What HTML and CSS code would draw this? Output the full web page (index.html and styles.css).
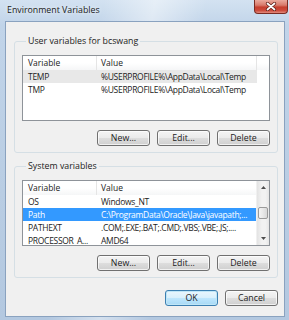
FILE: index.html
```html
<!DOCTYPE html>
<html>
<head>
<meta charset="utf-8">
<link rel="stylesheet" href="styles.css">
</head>
<body>
<div class="window">
  <div class="titlebar">
    <span class="title">Environment Variables</span>
    <div class="close">
      <svg width="12" height="9" viewBox="0 0 12 9"><path d="M2.5 1.5 L9.5 7.5 M9.5 1.5 L2.5 7.5" stroke="#5a1a12" stroke-width="3.2" stroke-linecap="round"/><path d="M2.5 1.5 L9.5 7.5 M9.5 1.5 L2.5 7.5" stroke="#ffffff" stroke-width="1.8" stroke-linecap="round"/></svg>
    </div>
  </div>
  <div class="client">
    <fieldset class="group">
      <legend class="group-label">User variables for bcswang</legend>
      <div class="list">
        <div class="list-main">
          <div class="header">
            <div class="hcell col-var">Variable</div>
            <div class="hcell col-val">Value</div>
            <div class="hcell col-fill"></div>
          </div>
          <div class="row row-inactive"><div class="cell col-var">TEMP</div><div class="cell col-val">%USERPROFILE%\AppData\Local\Temp</div></div>
          <div class="row"><div class="cell col-var">TMP</div><div class="cell col-val">%USERPROFILE%\AppData\Local\Temp</div></div>
        </div>
      </div>
      <div class="btn-row">
        <button class="btn">New...</button>
        <button class="btn">Edit...</button>
        <button class="btn">Delete</button>
      </div>
    </fieldset>
    <fieldset class="group group-second">
      <legend class="group-label">System variables</legend>
      <div class="list">
        <div class="list-main">
          <div class="header">
            <div class="hcell col-var">Variable</div>
            <div class="hcell col-val">Value</div>
          </div>
          <div class="row"><div class="cell col-var">OS</div><div class="cell col-val">Windows_NT</div></div>
          <div class="row row-selected"><div class="cell col-var">Path</div><div class="cell col-val">C:\ProgramData\Oracle\Java\javapath;...</div></div>
          <div class="row"><div class="cell col-var">PATHEXT</div><div class="cell col-val">.COM;.EXE;.BAT;.CMD;.VBS;.VBE;.JS;....</div></div>
          <div class="row"><div class="cell col-var">PROCESSOR_A...</div><div class="cell col-val">AMD64</div></div>
        </div>
        <div class="scrollbar">
          <div class="sb-arrow"><svg width="5" height="3" viewBox="0 0 5 3"><path d="M0 3 L2.5 0 L5 3 Z" fill="#4d4d4d"/></svg></div>
          <div class="sb-track">
            <div class="sb-space sb-space-top"></div>
            <div class="sb-thumb"></div>
            <div class="sb-space"></div>
          </div>
          <div class="sb-arrow"><svg width="5" height="3" viewBox="0 0 5 3"><path d="M0 0 L2.5 3 L5 0 Z" fill="#4d4d4d"/></svg></div>
        </div>
      </div>
      <div class="btn-row">
        <button class="btn">New...</button>
        <button class="btn">Edit...</button>
        <button class="btn">Delete</button>
      </div>
    </fieldset>
    <div class="dialog-buttons">
      <button class="btn btn-default">OK</button>
      <button class="btn">Cancel</button>
    </div>
  </div>
</div>
</body>
</html>
```
FILE: styles.css
```css
html, body {
  margin: 0;
  padding: 0;
  width: 289px;
  height: 320px;
  overflow: hidden;
}
body {
  font-family: "Open Sans", "DejaVu Sans", sans-serif;
  font-size: 8.5px;
  color: #222;
}
.window {
  width: 289px;
  height: 320px;
  display: flex;
  flex-direction: column;
  background:
    linear-gradient(100deg, rgba(255,255,255,0) 30%, rgba(255,255,255,0.45) 45%, rgba(255,255,255,0) 60%),
    linear-gradient(180deg, #d3e2f1 0%, #c1d4e9 8%, #b9cde3 60%, #b3c8e0 100%);
}
.titlebar {
  height: 21px;
  display: flex;
  align-items: flex-start;
  padding-left: 7px;
  flex: none;
}
.title {
  margin-top: 4px;
  line-height: 12px;
  font-size: 8.8px;
  color: #1a1a1a;
  text-shadow: 0 0 4px rgba(255,255,255,0.9);
}
.close {
  margin-left: auto;
  margin-right: 1px;
  width: 34px;
  height: 14px;
  box-sizing: border-box;
  border: 1px solid #7a2b22;
  border-top: none;
  border-radius: 0 0 4px 4px;
  background: linear-gradient(180deg, #eaa99c 0%, #d87a6b 40%, #c63f2e 55%, #cc4a3b 80%, #e28b7d 100%);
  display: flex;
  align-items: center;
  justify-content: center;
}
.close svg { display: block; }
.client {
  flex: 1;
  margin: 0 4px 3px 5px;
  border: 1px solid #8aa2bf;
  background: #f0f0f0;
  display: flex;
  flex-direction: column;
  min-height: 0;
}
.group {
  margin: 13px 6px 0 8px;
  padding: 8px 7px 6px 7px;
  border: 1px solid #d5dfe5;
  border-radius: 3px;
  min-width: 0;
}
.group-second {
  margin-top: 7px;
}
.group-label {
  padding: 0 2px;
  margin-left: 4px;
  line-height: 12px;
  font-size: 8.8px;
}
.list {
  height: 66px;
  box-sizing: border-box;
  border: 1px solid #8e9399;
  background: #fff;
  display: flex;
  overflow: hidden;
}
.list-main {
  flex: 1;
  min-width: 0;
  display: flex;
  flex-direction: column;
}
.header {
  height: 14px;
  flex: none;
  display: flex;
  background: linear-gradient(180deg, #ffffff 0%, #ffffff 50%, #f5f6f7 100%);
}
.hcell {
  box-sizing: border-box;
  line-height: 14px;
  border-right: 1px solid #e5e5e5;
  white-space: nowrap;
}
.col-var {
  width: 74px;
  padding-left: 5px;
  flex: none;
  box-sizing: border-box;
}
.col-val {
  width: 160px;
  padding-left: 4px;
  flex: none;
  box-sizing: border-box;
  white-space: nowrap;
}
.col-fill {
  flex: 1;
  border-right: none;
}
.row {
  height: 13px;
  flex: none;
  display: flex;
  width: 234px;
}
.cell {
  line-height: 13px;
  white-space: nowrap;
  letter-spacing: -0.3px;
}
.row-inactive {
  background: #e8e8e8;
}
.row-selected {
  background: #3399ff;
  color: #fff;
}
.scrollbar {
  width: 12px;
  flex: none;
  display: flex;
  flex-direction: column;
  background: linear-gradient(90deg, #e3e3e3 0%, #f2f2f2 40%, #f2f2f2 70%, #e6e6e6 100%);
  border-left: 1px solid #f0f0f0;
}
.sb-arrow {
  height: 13px;
  flex: none;
  display: flex;
  align-items: center;
  justify-content: center;
}
.sb-arrow svg { display: block; }
.sb-track {
  flex: 1;
  display: flex;
  flex-direction: column;
  align-items: center;
}
.sb-space { flex: 1; }
.sb-space-top { flex: none; height: 13px; }
.sb-thumb {
  width: 10px;
  height: 12px;
  box-sizing: border-box;
  border: 1px solid #9a9a9a;
  border-radius: 2px;
  background: linear-gradient(90deg, #f4f4f4 0%, #e8e8e8 50%, #d8d8d8 100%);
}
.btn-row {
  margin-top: 9px;
  display: flex;
  justify-content: flex-end;
  gap: 7px;
}
.btn {
  width: 53px;
  height: 16px;
  padding: 0;
  margin: 0;
  box-sizing: border-box;
  border: 1px solid #707070;
  border-radius: 3px;
  background: linear-gradient(180deg, #f4f4f4 0%, #ebebeb 48%, #dddddd 52%, #cfcfcf 100%);
  font-family: inherit;
  font-size: 8.8px;
  color: #222;
  line-height: 14px;
  box-shadow: inset 0 0 0 1px rgba(255,255,255,0.7);
}
.btn-default {
  border-color: #3c7fb1;
  box-shadow: inset 0 0 0 1px #bfe6f7;
  background: linear-gradient(180deg, #eaf6fd 0%, #d9f0fc 48%, #bee6fd 52%, #a7d9f5 100%);
}
.dialog-buttons {
  margin: 12px 6px 0 0;
  display: flex;
  justify-content: flex-end;
  gap: 7px;
}
```
